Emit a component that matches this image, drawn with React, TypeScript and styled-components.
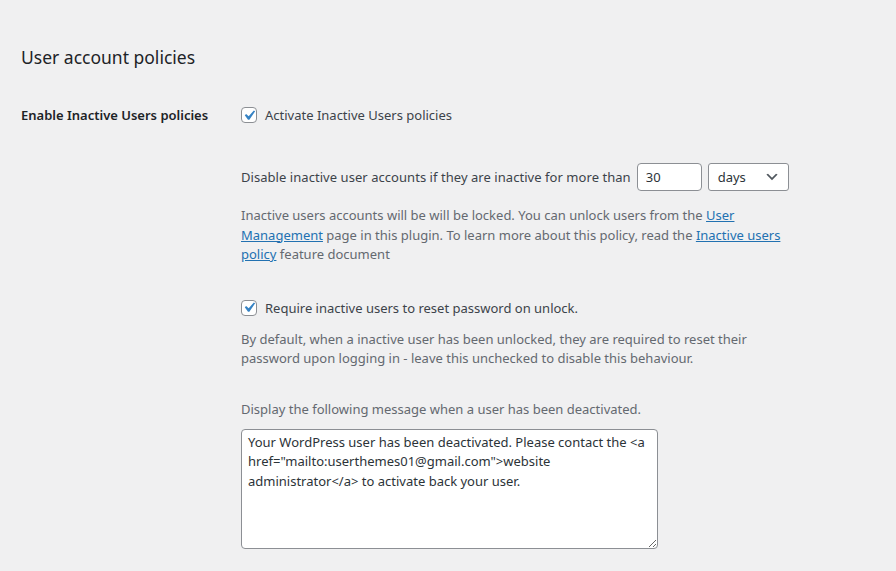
import { useState } from 'react';
import styled, { createGlobalStyle } from 'styled-components';

const GlobalStyle = createGlobalStyle`
  html, body {
    margin: 0;
    padding: 0;
    background: #f0f0f1;
  }
  body {
    font-family: 'Noto Sans', 'Liberation Sans', sans-serif;
    font-size: 13px;
    color: #3c434a;
  }
`;

const Page = styled.div`
  padding: 45px 20px 0 21px;
  min-height: 571px;
  box-sizing: border-box;
  overflow: hidden;
`;

const Heading = styled.h2`
  margin: 0;
  font-size: 17.5px;
  font-weight: 400;
  line-height: 25px;
  color: #1d2327;
`;

const FormRow = styled.div`
  display: grid;
  grid-template-columns: 220px 1fr;
  margin-top: 33px;
`;

const RowLabel = styled.div`
  font-weight: 600;
  color: #1d2327;
  line-height: 24px;
`;

const Field = styled.div`
  display: flex;
  flex-direction: column;
  max-width: 550px;
`;

const CheckLine = styled.label<{ $gap?: number }>`
  display: flex;
  align-items: center;
  gap: 8px;
  height: 24px;
  margin-top: ${(p) => p.$gap ?? 0}px;
  cursor: pointer;
`;

const Box = styled.span`
  width: 16px;
  height: 16px;
  box-sizing: border-box;
  border: 1px solid #8c8f94;
  border-radius: 4px;
  background: #fff;
  display: flex;
  align-items: center;
  justify-content: center;
  flex-shrink: 0;
`;

const InlineRow = styled.div`
  display: flex;
  align-items: center;
  gap: 6px;
  margin-top: 36px;
  height: 28px;
  white-space: nowrap;
`;

const RowText = styled.span`
  letter-spacing: 0.05px;
`;

const NumberInput = styled.input`
  width: 65px;
  height: 28px;
  box-sizing: border-box;
  border: 1px solid #8c8f94;
  border-radius: 4px;
  padding: 0 8px;
  font: inherit;
  color: #2c3338;
  background: #fff;
`;

const SelectBox = styled.div`
  width: 81px;
  height: 28px;
  box-sizing: border-box;
  border: 1px solid #8c8f94;
  border-radius: 3px;
  background: #fff;
  display: flex;
  align-items: center;
  justify-content: space-between;
  padding: 0 8px 0 9px;
  color: #2c3338;
`;

const Description = styled.p<{ $gap: number }>`
  margin: ${(p) => p.$gap}px 0 0 0;
  color: #646970;
  line-height: 19.6px;
`;

const Link = styled.a`
  color: #2271b1;
  text-decoration: underline;
`;

const Message = styled.textarea`
  margin-top: 9px;
  width: 417px;
  height: 120px;
  box-sizing: border-box;
  border: 1px solid #8c8f94;
  border-radius: 4px;
  padding: 3px 6px;
  font: inherit;
  line-height: 19.6px;
  color: #2c3338;
  background: #fff;
  resize: both;
`;

function Check({ checked }: { checked: boolean }) {
  return (
    <Box>
      {checked && (
        <svg width="21" height="21" viewBox="0 0 20 20" style={{ margin: '-3px' }}>
          <path d="M14.83 4.89l1.34.94-5.81 8.38H9.02L5.78 9.67l1.34-1.25 2.57 2.4z" fill="#3582c4" />
        </svg>
      )}
    </Box>
  );
}

export default function App() {
  const [active, setActive] = useState(true);
  const [reset, setReset] = useState(true);
  const [days, setDays] = useState('30');
  const [message, setMessage] = useState(
    'Your WordPress user has been deactivated. Please contact the <a href="mailto:userthemes01@gmail.com">website administrator</a> to activate back your user.'
  );

  return (
    <Page>
      <GlobalStyle />
      <Heading>User account policies</Heading>
      <FormRow>
        <RowLabel>Enable Inactive Users policies</RowLabel>
        <Field>
          <CheckLine onClick={() => setActive(!active)}>
            <Check checked={active} />
            Activate Inactive Users policies
          </CheckLine>

          <InlineRow>
            <RowText>Disable inactive user accounts if they are inactive for more than</RowText>
            <NumberInput value={days} onChange={(e) => setDays(e.target.value)} />
            <SelectBox>
              <span>days</span>
              <svg width="16" height="16" viewBox="0 0 20 20">
                <path d="M5 6l5 5 5-5 2 1-7 7-7-7 2-1z" fill="#50575e" />
              </svg>
            </SelectBox>
          </InlineRow>

          <Description $gap={15}>
            Inactive users accounts will be will be locked. You can unlock users from the{' '}
            <Link href="#">User Management</Link> page in this plugin. To learn more about this policy, read the{' '}
            <Link href="#">Inactive users policy</Link> feature document
          </Description>

          <CheckLine $gap={31} onClick={() => setReset(!reset)}>
            <Check checked={reset} />
            Require inactive users to reset password on unlock.
          </CheckLine>

          <Description $gap={10}>
            By default, when a inactive user has been unlocked, they are required to reset their password upon logging
            in - leave this unchecked to disable this behaviour.
          </Description>

          <Description $gap={31}>Display the following message when a user has been deactivated.</Description>

          <Message value={message} onChange={(e) => setMessage(e.target.value)} />
        </Field>
      </FormRow>
    </Page>
  );
}
